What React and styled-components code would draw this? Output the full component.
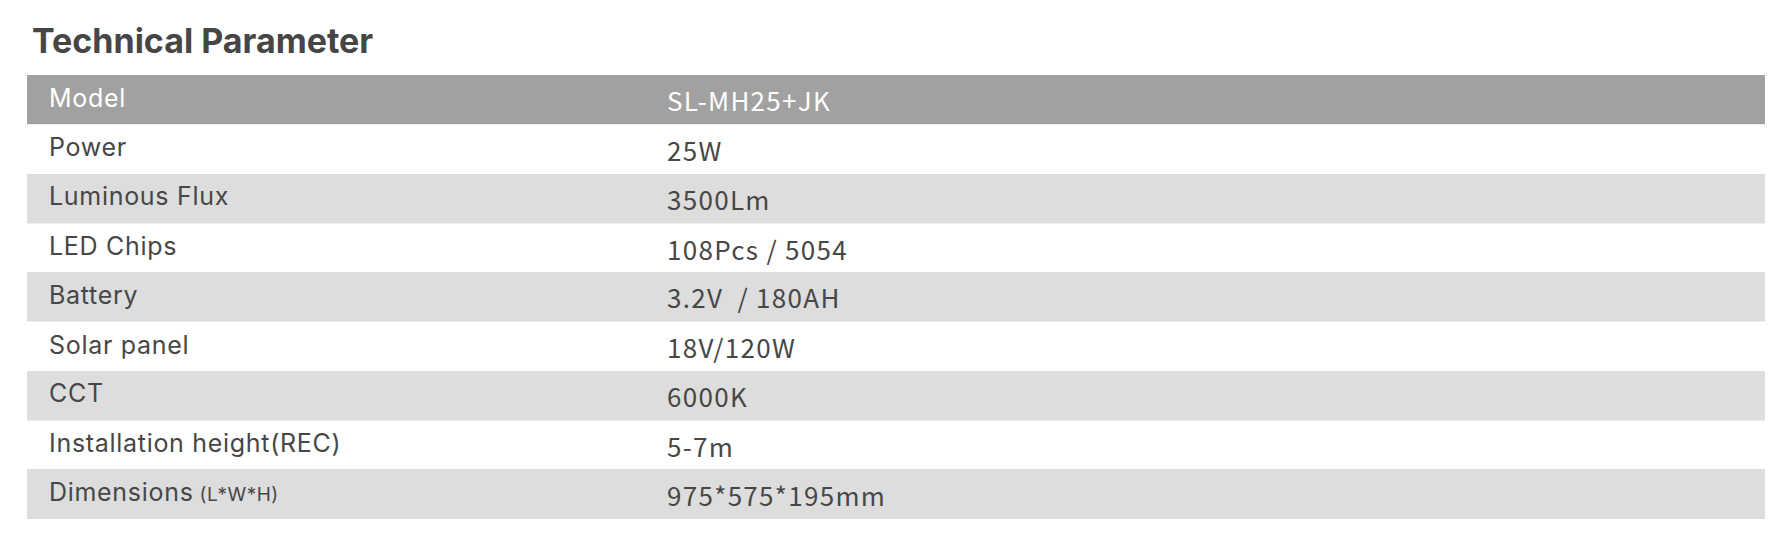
import React from 'react';
import styled, { createGlobalStyle } from 'styled-components';

// spec rows for the parameter table
const rows = [
  { label: 'Power', value: '25W' },
  { label: 'Luminous Flux', value: '3500Lm' },
  { label: 'LED Chips', value: '108Pcs / 5054' },
  { label: 'Battery', value: '3.2V\u00a0 / 180AH' },
  { label: 'Solar panel', value: '18V/120W' },
  { label: 'CCT', value: '6000K' },
  { label: 'Installation height(REC)', value: '5-7m' },
  { label: 'Dimensions', unit: '(L*W*H)', value: '975*575*195mm' },
];

export default function App() {
  return (
    <>
      <Global />
      <Page>
        <Title>Technical Parameter</Title>
        <Table>
          <Row $kind="head">
            <Label>Model</Label>
            <Value>SL-MH25+JK</Value>
          </Row>
          {rows.map((r, i) => (
            <Row key={r.label} $kind={i % 2 === 1 ? 'stripe' : 'plain'}>
              <Label>
                {r.label}
                {r.unit && <Unit>{r.unit}</Unit>}
              </Label>
              <Value>{r.value}</Value>
            </Row>
          ))}
        </Table>
      </Page>
    </>
  );
}

// styles
const Global = createGlobalStyle`
  body {
    margin: 0;
    background: #fff;
  }
`;

const Page = styled.div`
  padding: 18px 26px 0 27px;
`;

const Title = styled.h2`
  margin: 0 0 12px 5px;
  font-family: Inter, Roboto, 'Liberation Sans', sans-serif;
  font-weight: 700;
  font-size: 34px;
  line-height: 45px;
  color: #464646;
`;

const Table = styled.div`
  display: flex;
  flex-direction: column;
`;

const bg = { head: '#a0a1a0', stripe: '#dcdddc', plain: '#ffffff' };

const Row = styled.div`
  display: grid;
  grid-template-columns: 640px 1fr;
  height: 49.3px;
  align-items: center;
  background: ${(p) => bg[p.$kind]};
  color: ${(p) => (p.$kind === 'head' ? '#ffffff' : '#474747')};
  border-top: ${(p) => (p.$kind === 'plain' ? '1px solid #eeeeee' : '0')};
  box-sizing: border-box;
`;

const Label = styled.div`
  padding-left: 22px;
  padding-bottom: 4px;
  font-family: Inter, Roboto, 'Liberation Sans', sans-serif;
  font-size: 25px;
  letter-spacing: 0.7px;
`;

const Unit = styled.span`
  margin-left: 6px;
  font-size: 19px;
  letter-spacing: 0.5px;
`;

const Value = styled.div`
  font-family: 'Noto Sans CJK SC', 'Noto Sans', sans-serif;
  font-size: 26px;
  letter-spacing: 1.3px;
`;
